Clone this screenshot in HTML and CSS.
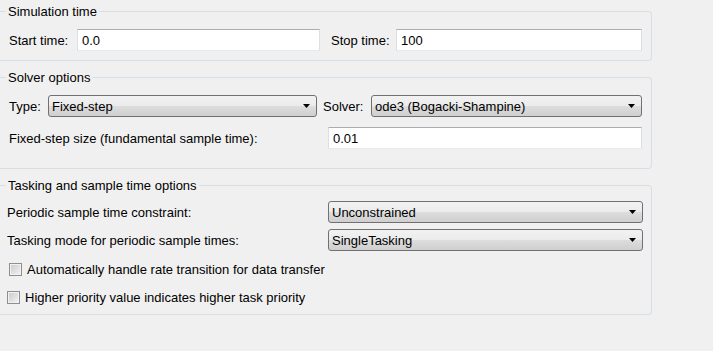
FILE: index.html
```html
<!DOCTYPE html>
<html lang="en">
<head>
  <meta charset="UTF-8">
  <title>Solver</title>
  <link rel="stylesheet" href="styles.css">
</head>
<body>
  <div class="panel">
    <div class="group group-sim">
      <div class="group-title">Simulation time</div>
      <div class="row">
        <label class="lbl lbl-start" for="start">Start time:</label>
        <input class="field field-start" id="start" type="text" value="0.0">
        <label class="lbl lbl-stop" for="stop">Stop time:</label>
        <input class="field field-stop" id="stop" type="text" value="100">
      </div>
    </div>

    <div class="group group-solver">
      <div class="group-title">Solver options</div>
      <div class="row">
        <label class="lbl lbl-type" for="type">Type:</label>
        <span class="combo combo-type">
          <select id="type"><option>Fixed-step</option></select>
        </span>
        <label class="lbl lbl-solver" for="solver">Solver:</label>
        <span class="combo combo-solver">
          <select id="solver"><option>ode3 (Bogacki-Shampine)</option></select>
        </span>
      </div>
      <div class="row row-step">
        <label class="lbl lbl-step" for="step">Fixed-step size (fundamental sample time):</label>
        <input class="field field-step" id="step" type="text" value="0.01">
      </div>
    </div>

    <div class="group group-tasking">
      <div class="group-title">Tasking and sample time options</div>
      <div class="row row-task">
        <label class="lbl lbl-wide" for="constraint">Periodic sample time constraint:</label>
        <span class="combo combo-wide">
          <select id="constraint"><option>Unconstrained</option></select>
        </span>
      </div>
      <div class="row row-task row-mode">
        <label class="lbl lbl-wide" for="mode">Tasking mode for periodic sample times:</label>
        <span class="combo combo-wide">
          <select id="mode"><option>SingleTasking</option></select>
        </span>
      </div>
      <label class="check check-rate">
        <input type="checkbox">
        <span>Automatically handle rate transition for data transfer</span>
      </label>
      <label class="check check-priority">
        <input type="checkbox">
        <span>Higher priority value indicates higher task priority</span>
      </label>
    </div>
  </div>
</body>
</html>
```

FILE: styles.css
```css
body {
  margin: 0;
  background-color: #f0f0f0;
  font-family: 'Liberation Sans', Arial, sans-serif;
  font-size: 13px;
  color: #000;
}

.panel {
  padding-top: 11px;
}

.group {
  width: 652px;
  box-sizing: border-box;
  border: 1px solid #d5dfe5;
  border-left: none;
  border-radius: 0 4px 4px 0;
}

.group + .group {
  margin-top: 16px;
}

.group-title {
  width: fit-content;
  margin: -8px 0 0 6px;
  padding: 0 2px;
  line-height: 15px;
  background-color: #f0f0f0;
}

.group-sim {
  padding-bottom: 9px;
}

.group-solver {
  padding-bottom: 19px;
}

.group-tasking {
  padding-bottom: 8px;
}

.row {
  display: flex;
  align-items: center;
  margin-top: 10px;
  padding: 0 9px;
}

.lbl {
  flex: none;
  white-space: nowrap;
}

.lbl-start { width: 68px; }
.lbl-stop { width: 65px; margin-left: 11px; }
.lbl-type { width: 39px; }
.lbl-solver { width: 48px; margin-left: 6px; }
.lbl-step { width: 319px; }

.field {
  box-sizing: border-box;
  height: 22px;
  padding: 0 4px;
  border: 1px solid #dbdfe6;
  border-top-color: #abadb3;
  border-bottom-color: #e3e9ef;
  background-color: #fff;
  font: inherit;
  color: #000;
  outline: none;
}

.field-start { width: 243px; }
.field-stop { width: 246px; }
.field-step { width: 314px; }

.combo {
  position: relative;
  display: block;
  flex: none;
}

.combo::after {
  content: '';
  position: absolute;
  top: 9px;
  right: 7px;
  width: 7px;
  height: 4px;
  background-color: #000;
  clip-path: polygon(0 0, 100% 0, 50% 100%);
  pointer-events: none;
}

.combo select {
  display: block;
  width: 100%;
  height: 22px;
  box-sizing: border-box;
  margin: 0;
  padding: 0 3px;
  border: 1px solid #707070;
  border-radius: 3px;
  background: linear-gradient(#f2f2f2 0%, #ebebeb 50%, #dddddd 50%, #cfcfcf 100%);
  appearance: none;
  -webkit-appearance: none;
  font: inherit;
  color: #000;
  outline: none;
}

.combo-type { width: 269px; }
.combo-solver { width: 271px; }

.row-task {
  margin-top: 8px;
  padding: 0 8px 0 7px;
}

.row-mode {
  margin-top: 6px;
}

.lbl-wide { width: 321px; }
.combo-wide { width: 315px; }

.check {
  display: flex;
  align-items: center;
  gap: 5px;
  height: 18px;
  margin-top: 10px;
  padding-left: 9px;
}

.check-rate {
  margin-top: 9px;
}

.check-priority {
  padding-left: 7px;
}

.check input {
  width: 13px;
  height: 13px;
  box-sizing: border-box;
  margin: 0;
  border: 1px solid #8f8f8f;
  background: linear-gradient(135deg, #c9c9c9, #f4f4f4);
  box-shadow: inset 0 0 0 1px #f2f2f2;
  appearance: none;
  -webkit-appearance: none;
}
```
